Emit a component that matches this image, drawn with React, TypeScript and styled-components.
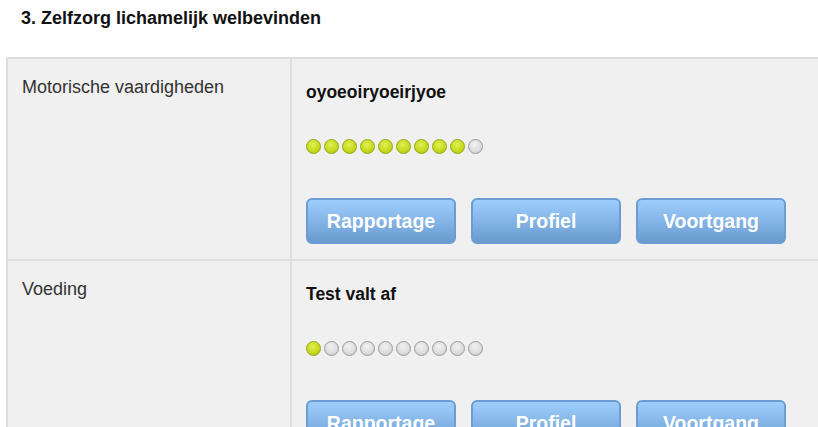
import { createGlobalStyle, styled } from "styled-components";

const GlobalStyle = createGlobalStyle`
  html, body {
    margin: 0;
    padding: 0;
    background: #ffffff;
    overflow: hidden;
  }
  body {
    font-family: "Liberation Sans", Arial, sans-serif;
  }
`;

const Page = styled.div`
  width: 818px;
  height: 427px;
  overflow: hidden;
  padding-top: 8px;
  box-sizing: border-box;
`;

const Title = styled.h3`
  margin: 0 0 28px 21px;
  font-size: 18px;
  line-height: 21px;
  font-weight: bold;
  color: #111;
`;

const Table = styled.div`
  margin-left: 6px;
  width: 840px;
  background: #f0f0f0;
  border-top: 2px solid #dddddd;
  border-left: 2px solid #dddddd;
`;

const Row = styled.div`
  display: grid;
  grid-template-columns: 284px 1fr;
  border-bottom: 2px solid #dddddd;
`;

const Label = styled.div`
  padding: 18px 14px 0 14px;
  font-size: 18px;
  line-height: 21px;
  color: #333;
  border-right: 2px solid #dddddd;
`;

const Content = styled.div`
  display: flex;
  flex-direction: column;
  align-items: flex-start;
  padding: 23px 14px 15px 14px;
`;

const Goal = styled.h4`
  margin: 0;
  font-size: 17.5px;
  line-height: 21px;
  font-weight: bold;
  color: #111;
`;

const Dots = styled.div`
  display: flex;
  gap: 3px;
  margin-top: 36px;
`;

const Dot = styled.span<{ $on: boolean }>`
  width: 15px;
  height: 15px;
  box-sizing: border-box;
  border-radius: 50%;
  border: 1px solid ${(p) => (p.$on ? "#95a80e" : "#9a9a9a")};
  background: ${(p) =>
    p.$on
      ? "radial-gradient(circle at 45% 35%, #e2ef55 0%, #c4d91c 60%, #a9c010 100%)"
      : "radial-gradient(circle at 45% 35%, #f2f2f2 0%, #dcdcdc 60%, #c8c8c8 100%)"};
`;

const Buttons = styled.div`
  display: flex;
  gap: 15px;
  margin-top: 44px;
`;

const Button = styled.button`
  width: 150px;
  height: 46px;
  box-sizing: border-box;
  border: 2px solid #6b9dd3;
  border-radius: 6px;
  background: linear-gradient(#9ecefc, #6a9bd0);
  color: #ffffff;
  font-family: "Liberation Sans", Arial, sans-serif;
  font-size: 19.5px;
  font-weight: bold;
  padding: 0;
  cursor: pointer;
`;

const items = [
  { label: "Motorische vaardigheden", goal: "oyoeoiryoeirjyoe", score: 9 },
  { label: "Voeding", goal: "Test valt af", score: 1 },
];

export default function App() {
  return (
    <>
      <GlobalStyle />
      <Page>
        <Title>3. Zelfzorg lichamelijk welbevinden</Title>
        <Table>
          {items.map((item) => (
            <Row key={item.label}>
              <Label>{item.label}</Label>
              <Content>
                <Goal>{item.goal}</Goal>
                <Dots>
                  {Array.from({ length: 10 }, (_, i) => (
                    <Dot key={i} $on={i < item.score} />
                  ))}
                </Dots>
                <Buttons>
                  <Button>Rapportage</Button>
                  <Button>Profiel</Button>
                  <Button>Voortgang</Button>
                </Buttons>
              </Content>
            </Row>
          ))}
        </Table>
      </Page>
    </>
  );
}
